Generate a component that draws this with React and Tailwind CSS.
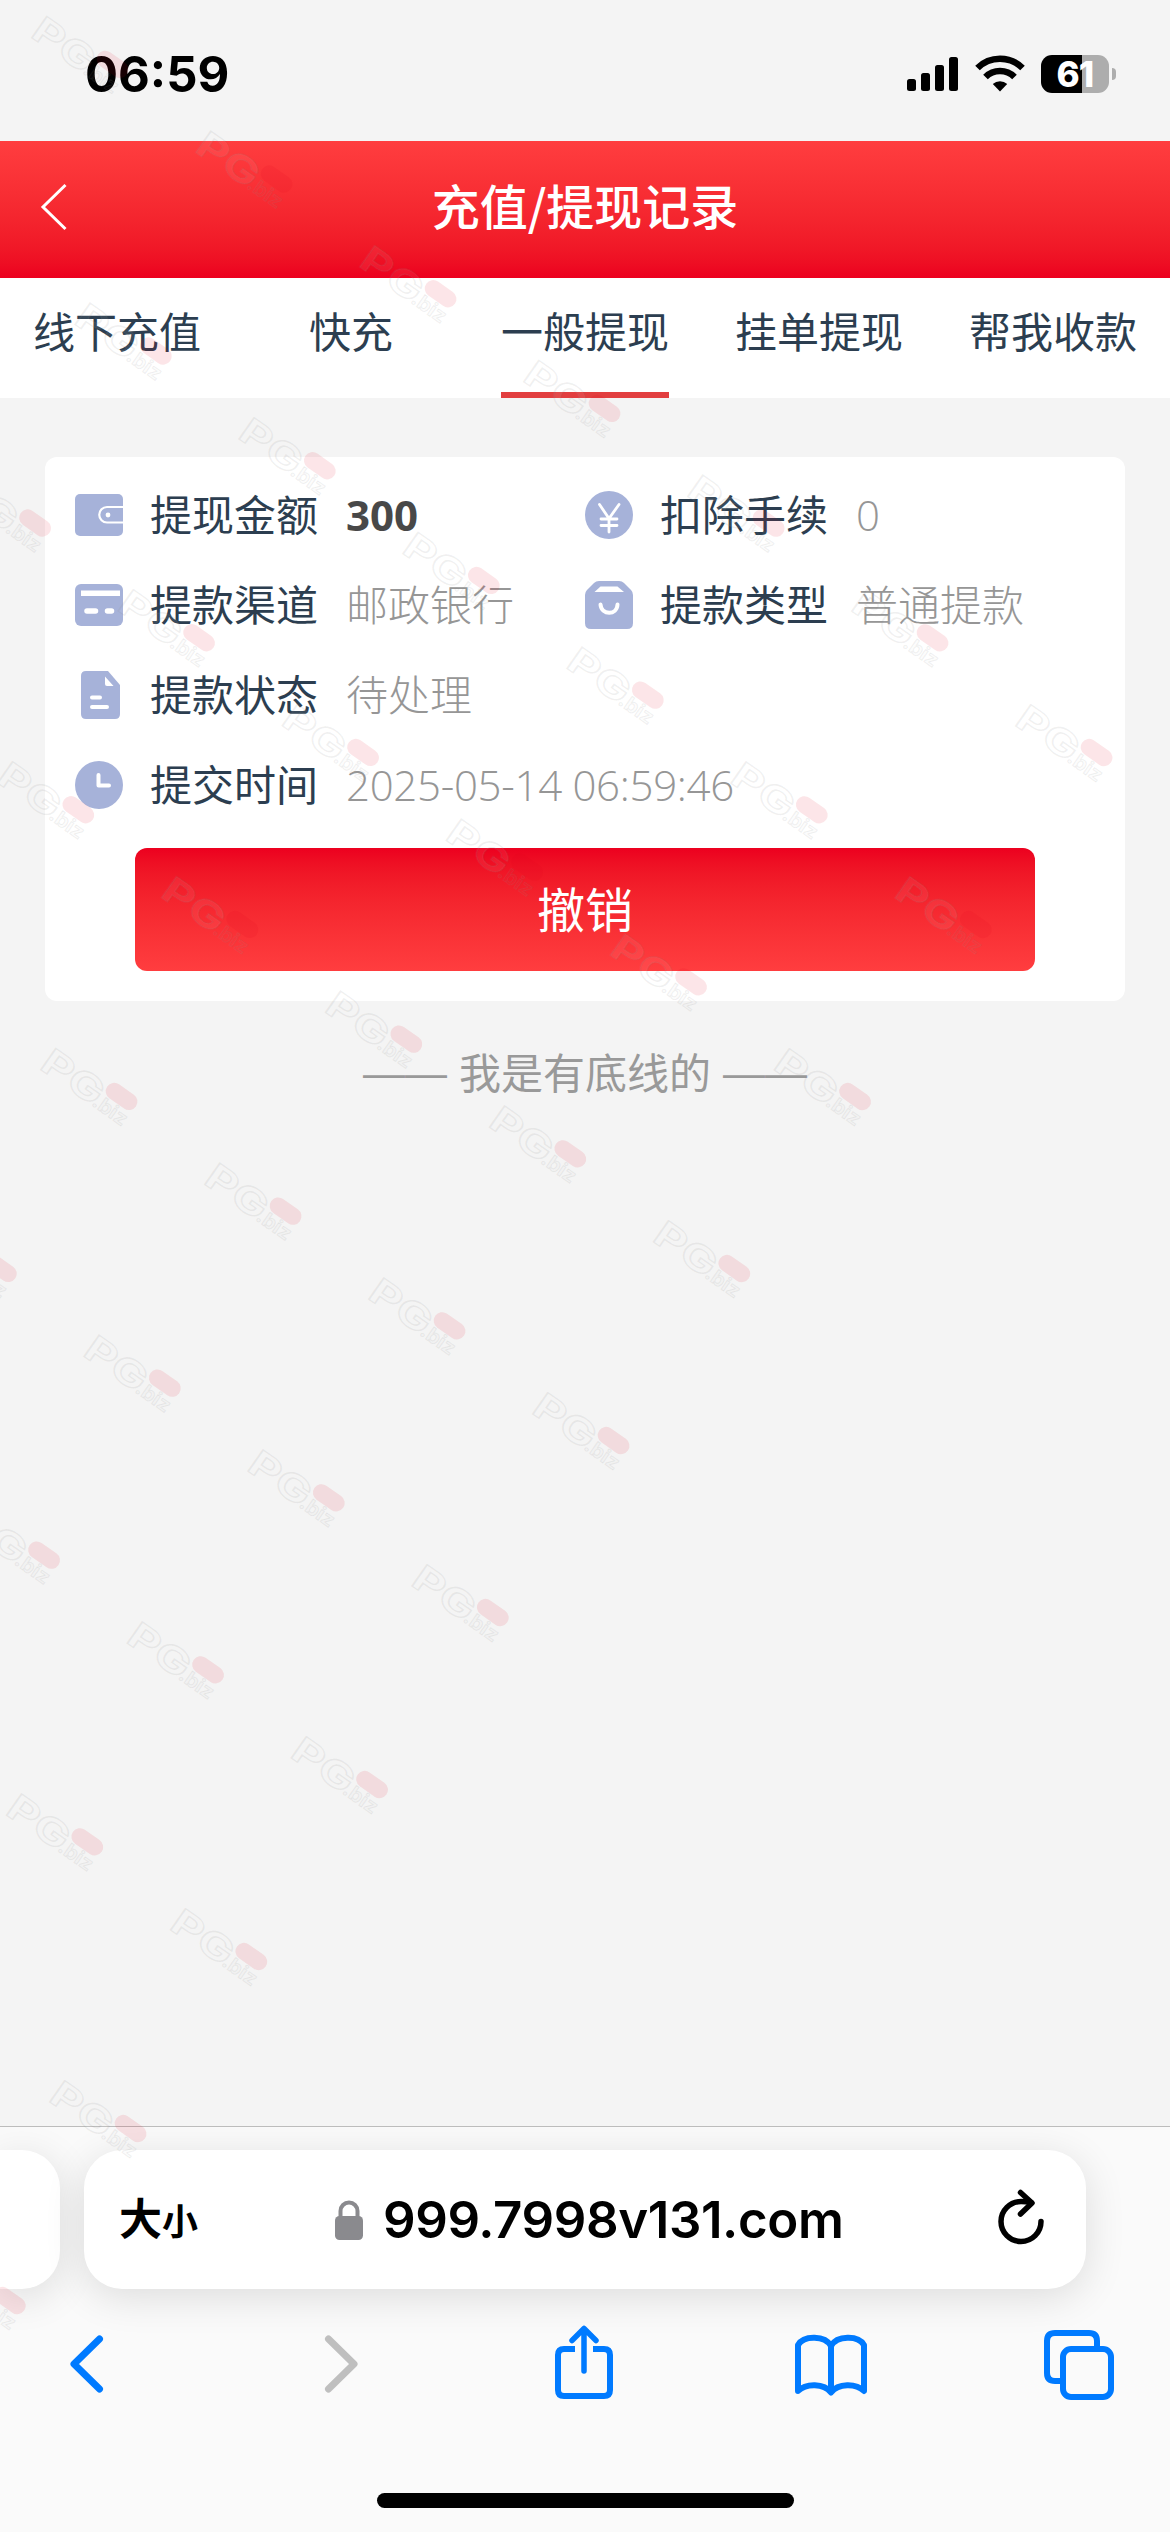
import React from 'react';

const TABS = ['线下充值', '快充', '一般提现', '挂单提现', '帮我收款'];

// Each row of the watermark grid holds the columns from..to
const WATERMARK_ROWS = [
    [0, 6],
    [0, 5],
    [-1, 4],
    [-1, 3],
    [-1, 2],
    [-2, 1],
    [-2, 0],
    [-2, -1],
    [-2, -2],
    [-3, -3],
];

const WalletIcon = () => (
    <svg className="w-12 h-12 shrink-0" viewBox="0 0 48 48" fill="none">
        <rect y="3" width="48" height="42" rx="5" fill="#a6b2d9" />
        <path d="M48 16H32a7.500 7.500 0 0 0 0 15.500h16" stroke="#fff" strokeWidth="2.200" />
        <circle cx="33" cy="24" r="2.400" fill="#fff" />
    </svg>
);

const YenIcon = () => (
    <svg className="w-12 h-12 shrink-0" viewBox="0 0 48 48" fill="none">
        <circle cx="24" cy="24" r="24" fill="#a6b2d9" />
        <path d="M14.500 13.500 24 27.500l10-14M24 27v14M16 28h16M16 34.500h16" stroke="#fff" strokeWidth="2.800" strokeLinecap="round" />
    </svg>
);

const CardIcon = () => (
    <svg className="w-12 h-12 shrink-0" viewBox="0 0 48 48" fill="none">
        <rect y="3" width="48" height="42" rx="6" fill="#a6b2d9" />
        <path d="M6 9.500h39v5.500H6z" fill="#fff" />
        <path d="M12 30h8.500M32.500 30h4" stroke="#fff" strokeWidth="5.500" strokeLinecap="round" />
    </svg>
);

const BagIcon = () => (
    <svg className="w-12 h-12 shrink-0" viewBox="0 0 48 48" fill="none">
        <path d="M14 0h20q3 0 5 2l7 7q2 2 2 5v28q0 6-6 6H6q-6 0-6-6V14q0-3 2-5l7-7q2-2 5-2z" fill="#a6b2d9" />
        <path d="M15.500 5.500h17l6.500 5.500H9.500z" fill="#fff" />
        <path d="M15.500 23.500c1 11 16.500 11 17 0" stroke="#fff" strokeWidth="4" strokeLinecap="round" />
    </svg>
);

const DocIcon = () => (
    <svg className="w-12 h-12 shrink-0" viewBox="0 0 48 48" fill="none">
        <path d="M11 0h22l12 14v29q0 5-5 5H11q-5 0-5-5V5q0-5 5-5z" fill="#a6b2d9" />
        <path d="M30 5.500 38.500 15H32q-2 0-2-2z" fill="#fff" />
        <path d="M17 26.500h8M17 36h15" stroke="#fff" strokeWidth="4" strokeLinecap="round" />
    </svg>
);

const ClockIcon = () => (
    <svg className="w-12 h-12 shrink-0" viewBox="0 0 48 48" fill="none">
        <circle cx="24" cy="24" r="24" fill="#a6b2d9" />
        <path d="M23.500 14v10.500H34" stroke="#fff" strokeWidth="4" strokeLinecap="round" strokeLinejoin="round" />
    </svg>
);

const Field = ({ icon, label, wide, children }) => (
    <div className={wide ? 'col-span-2 flex items-center h-[90px]' : 'flex items-center h-[90px]'}>
        {icon}
        <span className="ml-[27px] text-[42px] leading-[60px] text-[#2c3e50]">{label}</span>
        {children}
    </div>
);

const Value = ({ children }) => (
    <span className="ml-[28px] text-[42px] leading-[60px] font-light text-[#969696] whitespace-nowrap">{children}</span>
);

const StatusBar = () => (
    <div className="flex items-center justify-between h-[141px] pl-[85px] pr-[54px]">
        <span className="mt-[7px] text-[49px] leading-none font-bold text-black font-[Inter,sans-serif]">06:59</span>
        <div className="flex items-center gap-4 mt-[7px]">
            <svg className="w-[52px] h-[38px]" viewBox="0 0 52 38" fill="#000">
                <rect x="0" y="24" width="9" height="12" rx="2.500" />
                <rect x="14" y="18" width="9" height="18" rx="2.500" />
                <rect x="28" y="10" width="9" height="26" rx="2.500" />
                <rect x="42" y="2" width="9" height="34" rx="2.500" />
            </svg>
            <svg className="w-[50px] h-[38px]" viewBox="0 0 50 38" fill="none" stroke="#000" strokeWidth="6.500">
                <path d="M2.500 13a32 32 0 0 1 45 0" />
                <path d="M10.500 22a20.500 20.500 0 0 1 29 0" />
                <path d="M25 36.500 17.800 29a10.500 10.500 0 0 1 14.400 0z" fill="#000" stroke="none" />
            </svg>
            <div className="flex items-center">
                <div className="flex items-center justify-center w-[68px] h-[38px] rounded-[11px] bg-[linear-gradient(90deg,#000_60%,#adadad_60%)]">
                    <span className="text-[35px] leading-none font-extrabold tracking-tight text-white font-[Inter,sans-serif]">61</span>
                </div>
                <div className="ml-[3px] w-1 h-3 rounded-r-full bg-[#adadad]" />
            </div>
        </div>
    </div>
);

const Toolbar = () => (
    <div className="flex items-start pl-[68px] pt-[33px]">
        <svg className="mt-[12px] w-9 h-[60px]" viewBox="0 0 36 60" fill="none" stroke="#007aff" strokeWidth="7" strokeLinecap="round" strokeLinejoin="round">
            <path d="M31.500 5 6 30l25.500 25" />
        </svg>
        <svg className="mt-[12px] ml-[220px] w-9 h-[60px]" viewBox="0 0 36 60" fill="none" stroke="#bfbfbf" strokeWidth="7" strokeLinecap="round" strokeLinejoin="round">
            <path d="M4.500 5 30 30 4.500 55" />
        </svg>
        <svg className="mt-[2px] ml-[194px] w-[60px] h-[76px]" viewBox="0 0 60 76" fill="none" stroke="#007aff" strokeWidth="6" strokeLinecap="round" strokeLinejoin="round">
            <path d="M21 25H10q-6 0-6 6v35q0 6 6 6h40q6 0 6-6V31q0-6-6-6H39" strokeLinecap="butt" />
            <path d="M30 47V5M18 16.500 30 4.500l12 12" strokeWidth="5.500" />
        </svg>
        <svg className="mt-[12px] ml-[180px] w-[74px] h-[62px]" viewBox="0 0 74 62" fill="none" stroke="#007aff" strokeWidth="6" strokeLinecap="round" strokeLinejoin="round">
            <path d="M37 12C31 1.500 10 1 4 11v46c8-8 26-8 33 1.500C44 49 62 49 70 57V11C64 1 43 1.500 37 12zM37 12v46" />
        </svg>
        <svg className="mt-[7px] ml-[175px] w-[72px] h-[72px]" viewBox="0 0 72 72" fill="none" stroke="#007aff" strokeWidth="6">
            <path d="M17 52h-5q-8 0-8-8V12q0-8 8-8h34q8 0 8 8v7" />
            <rect x="20" y="20" width="48" height="48" rx="8" />
        </svg>
    </div>
);

const Browser = () => (
    <div className="flex flex-col h-[406px] border-t border-[#bcbcbc] bg-[#fafafa] overflow-hidden">
        <div className="flex gap-6 pt-[23px]">
            <div className="w-[60px] h-[139px] shrink-0 rounded-r-[38px] bg-white shadow-[0_8px_40px_rgba(0,0,0,0.12)]" />
            <div className="flex items-center w-[1002px] h-[139px] pl-[35px] pr-[42px] rounded-[38px] bg-white shadow-[0_8px_40px_rgba(0,0,0,0.12)]">
                <span className="flex items-baseline w-[90px] text-[43px] font-bold text-black">
                    大<span className="text-[36px]">小</span>
                </span>
                <svg className="ml-[125px] w-[30px] h-10 shrink-0" viewBox="0 0 30 40" fill="none">
                    <path d="M6.500 18v-7a8.500 8.500 0 0 1 17 0v7" stroke="#8a8a8e" strokeWidth="4" />
                    <rect x="1" y="16" width="28" height="24" rx="4.500" fill="#8a8a8e" />
                </svg>
                <span className="ml-[19px] text-[51px] leading-none font-semibold text-black font-[Inter,sans-serif] tracking-[-0.4px]">999.7998v131.com</span>
                <svg className="ml-auto w-[46px] h-14 shrink-0 -mt-[6px]" viewBox="0 0 46 56" fill="none" stroke="#000" strokeWidth="5.500" strokeLinecap="round" strokeLinejoin="round">
                    <path d="M43 32.500A20 20 0 1 1 23 12.500q5 0 10 1" />
                    <path d="M22.500 3.500 34 14 22.500 25" />
                </svg>
            </div>
        </div>
        <Toolbar />
        <div className="mt-auto mb-6 mx-auto w-[417px] h-[15px] rounded-full bg-black" />
    </div>
);

const Watermarks = () => (
    <svg className="absolute inset-0 w-[1170px] h-[2532px] pointer-events-none" viewBox="0 0 1170 2532">
        {WATERMARK_ROWS.map(([from, to], row) =>
            Array.from({ length: to - from + 1 }, (_, i) => {
                const x = 33 + row * 43.25 + (from + i) * 164;
                const y = 8 + row * 286.7 + (from + i) * 114.7;
                return (
                    <g key={`${row}-${i}`} transform={`translate(${x} ${y}) rotate(35)`} fontFamily="Inter, sans-serif" fontWeight="700">
                        <text x="13" y="25" fontSize="36" textLength="68" lengthAdjust="spacingAndGlyphs" fill="#fff" fillOpacity="0.08" stroke="#888" strokeOpacity="0.12" strokeWidth="1.400">PG</text>
                        <text x="77" y="25" fontSize="20" textLength="38" lengthAdjust="spacingAndGlyphs" fill="#aaa" fillOpacity="0.05" stroke="#888" strokeOpacity="0.12">.biz</text>
                        <rect x="80" y="-8" width="35" height="17" rx="8.500" fill="#e60020" fillOpacity="0.1" />
                    </g>
                );
            })
        )}
    </svg>
);

export default function App() {
    return (
        <div className="relative flex flex-col w-[1170px] h-[2532px] overflow-hidden bg-[#f4f4f4] font-['Open_Sans','Noto_Sans_CJK_SC',sans-serif]">
            <StatusBar />

            {/* Page header */}
            <header className="grid grid-cols-3 items-center h-[137px] pb-1.5 bg-linear-to-b from-[#ff3d3f] to-[#ec001f]">
                <svg className="ml-[40px] w-7 h-12" viewBox="0 0 28 48" fill="none" stroke="#fff" strokeWidth="3">
                    <path d="M25.500 2 3 24l22.500 22" />
                </svg>
                <h1 className="-mt-1.5 text-center text-[48px] font-medium text-white whitespace-nowrap font-['Noto_Sans_CJK_SC',sans-serif]">充值/提现记录</h1>
            </header>

            {/* Tabs */}
            <nav className="grid grid-cols-5 h-[120px] bg-white">
                {TABS.map((tab) => (
                    <div key={tab} className="flex flex-col items-center justify-between">
                        <span className="pt-6 text-[42px] leading-[60px] text-[#2c3e50]">{tab}</span>
                        {tab === '一般提现' && <div className="w-[168px] h-1.5 bg-[#e23e3f]" />}
                    </div>
                ))}
            </nav>

            <main className="flex-1 px-[45px] pt-[59px]">
                <div className="h-[544px] px-[30px] pt-[13px] rounded-xl bg-white">
                    <div className="grid grid-cols-[510px_510px]">
                        <Field icon={<WalletIcon />} label="提现金额">
                            <span className="ml-[28px] text-[42px] leading-[60px] font-bold text-[#484848]">300</span>
                        </Field>
                        <Field icon={<YenIcon />} label="扣除手续">
                            <Value>0</Value>
                        </Field>
                        <Field icon={<CardIcon />} label="提款渠道">
                            <Value>邮政银行</Value>
                        </Field>
                        <Field icon={<BagIcon />} label="提款类型">
                            <Value>普通提款</Value>
                        </Field>
                        <Field icon={<DocIcon />} label="提款状态" wide>
                            <Value>待处理</Value>
                        </Field>
                        <Field icon={<ClockIcon />} label="提交时间" wide>
                            <Value>
                                <span className="tracking-[-0.3px]">2025-05-14 06:59:46</span>
                            </Value>
                        </Field>
                    </div>
                    <button className="flex items-center justify-center w-[900px] h-[123px] mt-[18px] mx-auto rounded-xl bg-linear-to-b from-[#ec001f] to-[#ff3d3f] text-[48px] text-white">
                        撤销
                    </button>
                </div>
                <p className="mt-[42px] flex justify-center gap-3 text-[42px] leading-[60px] text-[#999999]">
                    <span className="font-['Liberation_Sans',sans-serif]">——</span>
                    我是有底线的
                    <span className="font-['Liberation_Sans',sans-serif]">——</span>
                </p>
            </main>

            <Browser />
            <Watermarks />
        </div>
    );
}
